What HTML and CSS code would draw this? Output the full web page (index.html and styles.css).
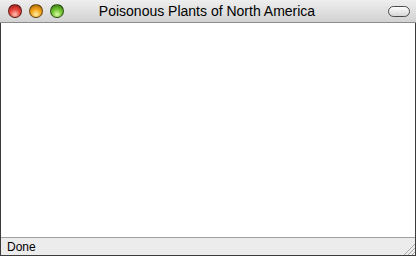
FILE: index.html
```html
<!DOCTYPE html>
<html lang="en">
<head>
  <meta charset="UTF-8" />
  <title>Poisonous Plants of North America</title>
  <link rel="stylesheet" href="styles.css">
</head>
<body>
  <div class="window">
    <div class="titlebar">
      <div class="lights">
        <span class="light close"></span>
        <span class="light minimize"></span>
        <span class="light zoom"></span>
      </div>
      <div class="title">Poisonous Plants of North America</div>
      <span class="pill"></span>
    </div>

    <div class="content"></div>

    <div class="statusbar">
      <span class="status">Done</span>
      <svg class="grip" width="14" height="14" viewBox="0 0 14 14">
        <line x1="3" y1="14" x2="14" y2="3" stroke="#a8a8a8" stroke-width="1" />
        <line x1="7" y1="14" x2="14" y2="7" stroke="#a8a8a8" stroke-width="1" />
        <line x1="11" y1="14" x2="14" y2="11" stroke="#a8a8a8" stroke-width="1" />
      </svg>
    </div>
  </div>
</body>
</html>
```

FILE: styles.css
```css
body {
  margin: 0;
  font-family: "Liberation Sans", Arial, sans-serif;
}
.window {
  width: 416px;
  height: 256px;
  box-sizing: border-box;
  border: 1px solid #3c3c3c;
  border-top: none;
  display: flex;
  flex-direction: column;
  background: #fff;
}
.titlebar {
  height: 22px;
  flex: none;
  display: flex;
  align-items: center;
  background: linear-gradient(#eeeeee, #d2d2d2);
  border-bottom: 1px solid #8c8c8c;
  margin: 0 -1px;
}
.lights {
  display: flex;
  gap: 7px;
  padding-left: 8px;
}
.light {
  width: 14px;
  height: 14px;
  border-radius: 50%;
  box-sizing: border-box;
  border: 1px solid rgba(0, 0, 0, 0.5);
}
.close {
  background: radial-gradient(circle at 50% 78%, #ffc2b6 0, #e8473c 45%, #8c1410 100%);
}
.minimize {
  background: radial-gradient(circle at 50% 78%, #fff0a8 0, #f5a51c 45%, #9a5a00 100%);
}
.zoom {
  background: radial-gradient(circle at 50% 78%, #dcfaa4 0, #72c434 45%, #2d6c08 100%);
}
.title {
  flex: 1;
  text-align: center;
  font-size: 14px;
  color: #000;
  padding-right: 38px;
}
.pill {
  width: 20px;
  height: 9px;
  border: 1px solid #4a4a4a;
  border-radius: 6px;
  background: linear-gradient(#fdfdfd, #d6d6d6);
  margin-right: 6px;
}
.content {
  flex: 1;
  background: #fff;
}
.statusbar {
  height: 17px;
  flex: none;
  display: flex;
  align-items: center;
  justify-content: space-between;
  border-top: 1px solid #a0a0a0;
  background: #ececec;
}
.status {
  font-size: 12px;
  color: #000;
  padding-left: 6px;
}
.grip {
  align-self: flex-end;
}
```
